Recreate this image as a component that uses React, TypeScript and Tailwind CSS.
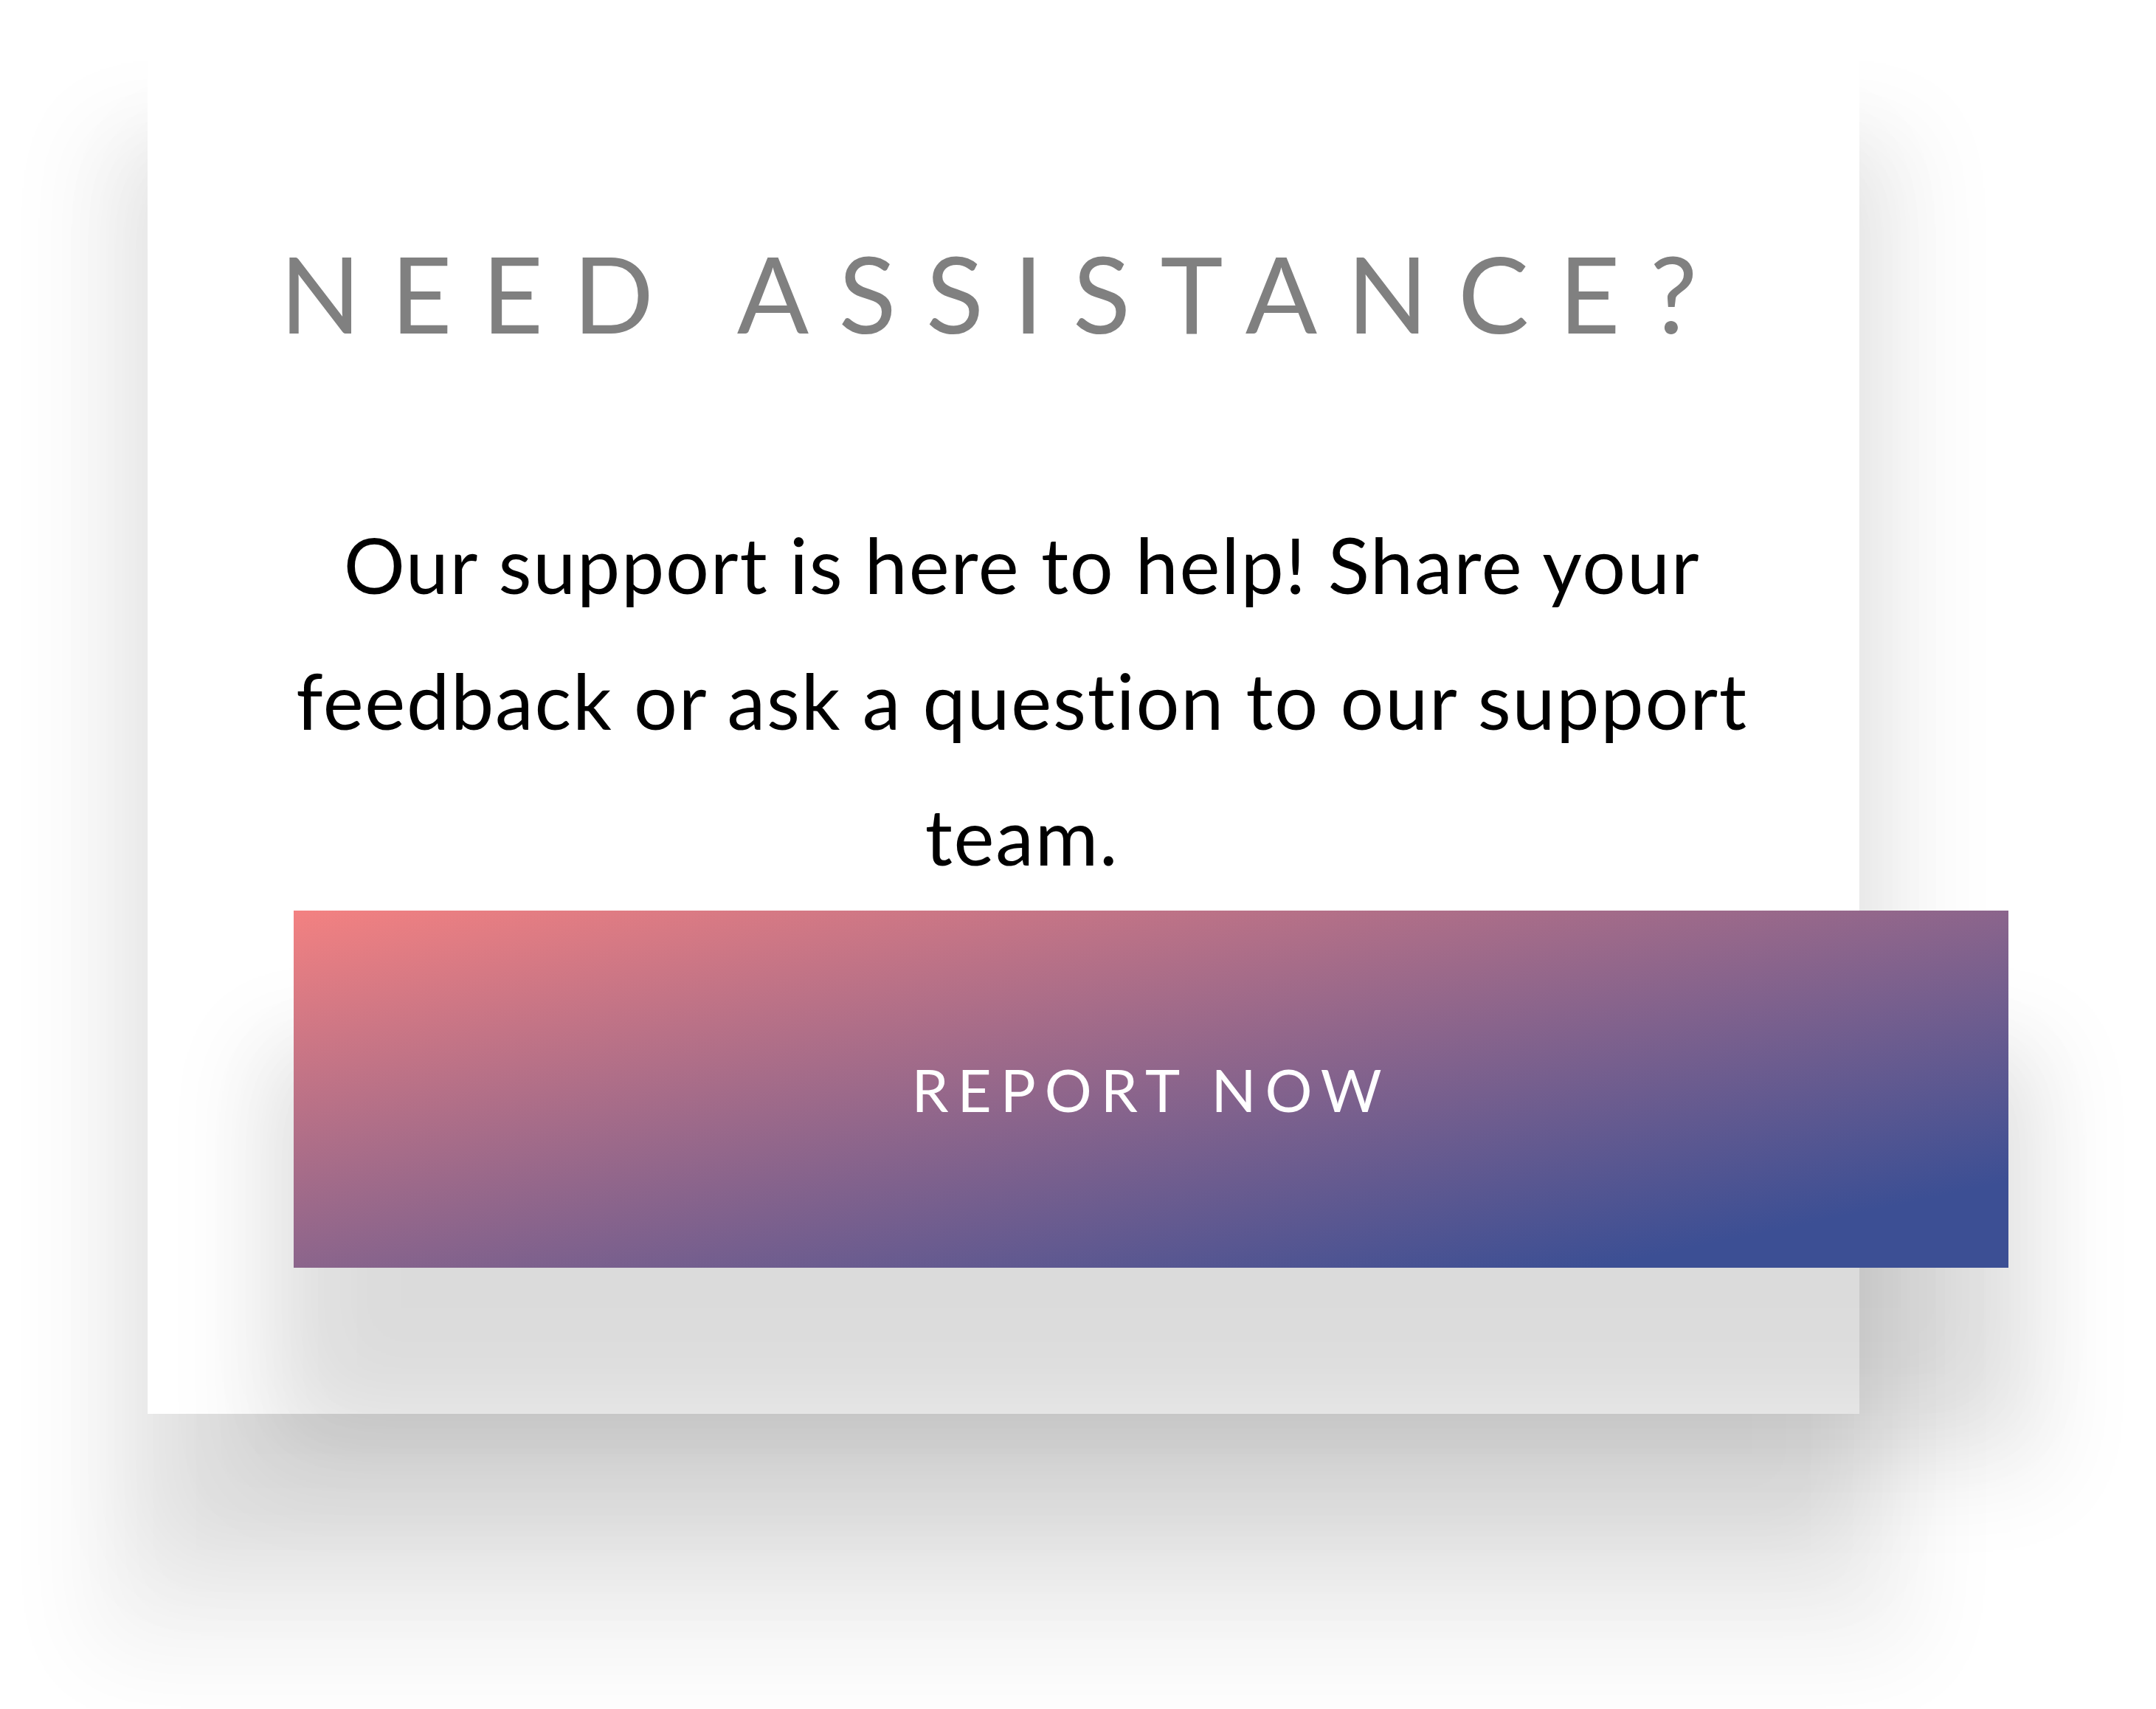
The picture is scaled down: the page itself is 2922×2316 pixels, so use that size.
import React from "react";

const SupportCard = () => {
  return (
    <div className="w-[2320px] bg-white pt-[311px] pb-[198px] shadow-[0_200px_120px_rgba(0,0,0,0.08),0_250px_120px_80px_rgba(0,0,0,0.055)]">
      <h2 className="text-center text-[144px] leading-[1.2] font-normal tracking-[0.28em] text-[#808080]">
        NEED ASSISTANCE?
      </h2>
      <p className="mt-[189px] pl-[150px] pr-[100px] text-center text-[104px] leading-[184px] tracking-[0.017em] text-black">
        Our support is here to help! Share your feedback or ask a question to
        our support team.
      </p>
      <button className="mt-[9px] ml-[198px] flex h-[484px] w-[2324px] items-center justify-center bg-[linear-gradient(to_bottom_right,#f38181,#3c4f94_88%)] text-[80px] tracking-[0.15em] text-white shadow-[0_200px_120px_rgba(0,0,0,0.08),0_230px_120px_60px_rgba(0,0,0,0.065)]">
        REPORT NOW
      </button>
    </div>
  );
};

const App = () => {
  return (
    <div className="h-[2316px] w-full overflow-hidden bg-white pl-[200px] font-[Lato,'Liberation_Sans',sans-serif]">
      <SupportCard />
    </div>
  );
};

export default App;
